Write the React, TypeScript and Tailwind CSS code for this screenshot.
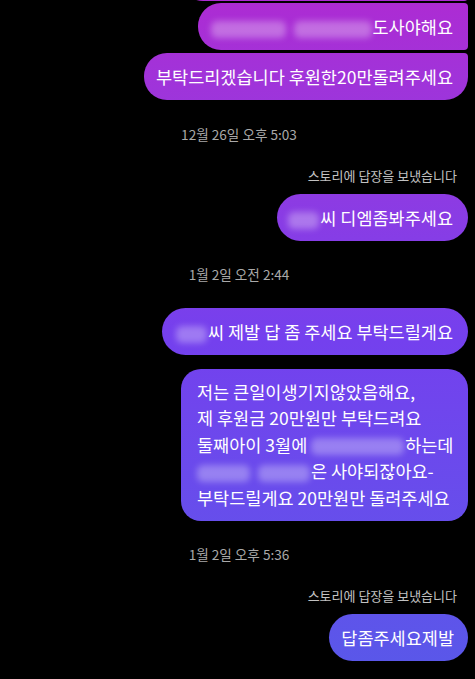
import React from 'react';

// bubbles share one gradient that is fixed to the viewport, like the real DM screen
const fill = 'bg-fixed bg-linear-to-b from-[#ad2bd3] via-[#7440ee] to-[#5858e9]';

const Blur: React.FC<{ w: number; gap?: number }> = ({ w, gap }) => (
  <span className="inline-flex items-center align-middle gap-[8px] mr-[1px]">
    <span
      className="inline-block h-[17px] rounded-[6px] bg-white/30 blur-[3px]"
      style={{ width: gap ? w - gap - 8 : w }}
    />
    {gap ? (
      <span className="inline-block h-[17px] rounded-[6px] bg-white/30 blur-[3px]" style={{ width: gap }} />
    ) : null}
  </span>
);

const Bubble: React.FC<{ className?: string; children: React.ReactNode }> = ({ className = '', children }) => (
  <div className={`self-end whitespace-nowrap text-white text-[17.5px] leading-[25px] py-[11px] ${fill} ${className}`}>
    {children}
  </div>
);

const Stamp: React.FC<{ text: string; className?: string }> = ({ text, className = '' }) => (
  <div className={`self-center ml-[10px] text-[13.6px] leading-[16px] text-[#a9a9a9] ${className}`}>{text}</div>
);

const StoryNote: React.FC<{ className?: string }> = ({ className = '' }) => (
  <div className={`self-end mr-[11px] text-[13px] leading-[16px] text-[#c2c2c2] ${className}`}>
    스토리에 답장을 보냈습니다
  </div>
);

export default function App() {
  return (
    <div
      className="h-[679px] w-full overflow-hidden bg-black flex flex-col pr-[7px]"
      style={{ fontFamily: '"Noto Sans CJK KR", "Noto Sans", sans-serif' }}
    >
      {/* end of the bubble above, cut off by the top of the screen */}
      <Bubble className="mt-[-46px] w-[288px] h-[47px] rounded-l-[23px] rounded-r-[4px]">
        <span />
      </Bubble>

      <Bubble className="mt-[2px] pl-[13px] pr-[15px] rounded-l-[23px] rounded-r-[4px]">
        <Blur w={161} gap={78} />
        도사야해요
      </Bubble>
      <Bubble className="mt-[3px] pl-[12px] pr-[15px] rounded-l-[23px] rounded-tr-[4px] rounded-br-[23px]">
        부탁드리겠습니다 후원한20만돌려주세요
      </Bubble>

      <Stamp className="mt-[26px]" text="12월 26일 오후 5:03" />
      <StoryNote className="mt-[26px]" />
      <Bubble className="mt-[10px] pl-[11px] pr-[15px] rounded-full">
        <Blur w={31} />씨 디엠좀봐주세요
      </Bubble>

      <Stamp className="mt-[25px]" text="1월 2일 오전 2:44" />
      <Bubble className="mt-[26px] pl-[14px] pr-[15px] rounded-full">
        <Blur w={31} />씨 제발 답 좀 주세요 부탁드릴게요
      </Bubble>

      <Bubble className="mt-[14px] !py-[9.5px] pl-[16px] pr-[15px] rounded-[20px] !leading-[26.5px] w-[287px]">
        <div>저는 큰일이생기지않았음해요,</div>
        <div>제 후원금 20만원만 부탁드려요</div>
        <div>
          둘째아이 3월에 <Blur w={93} />하는데
        </div>
        <div>
          <Blur w={113} gap={52} />은 사야되잖아요-
        </div>
        <div>부탁드릴게요 20만원만 돌려주세요</div>
      </Bubble>

      <Stamp className="mt-[25px]" text="1월 2일 오후 5:36" />
      <StoryNote className="mt-[26px]" />
      <Bubble className="mt-[10px] pl-[12px] pr-[14px] rounded-full">답좀주세요제발</Bubble>
    </div>
  );
}
